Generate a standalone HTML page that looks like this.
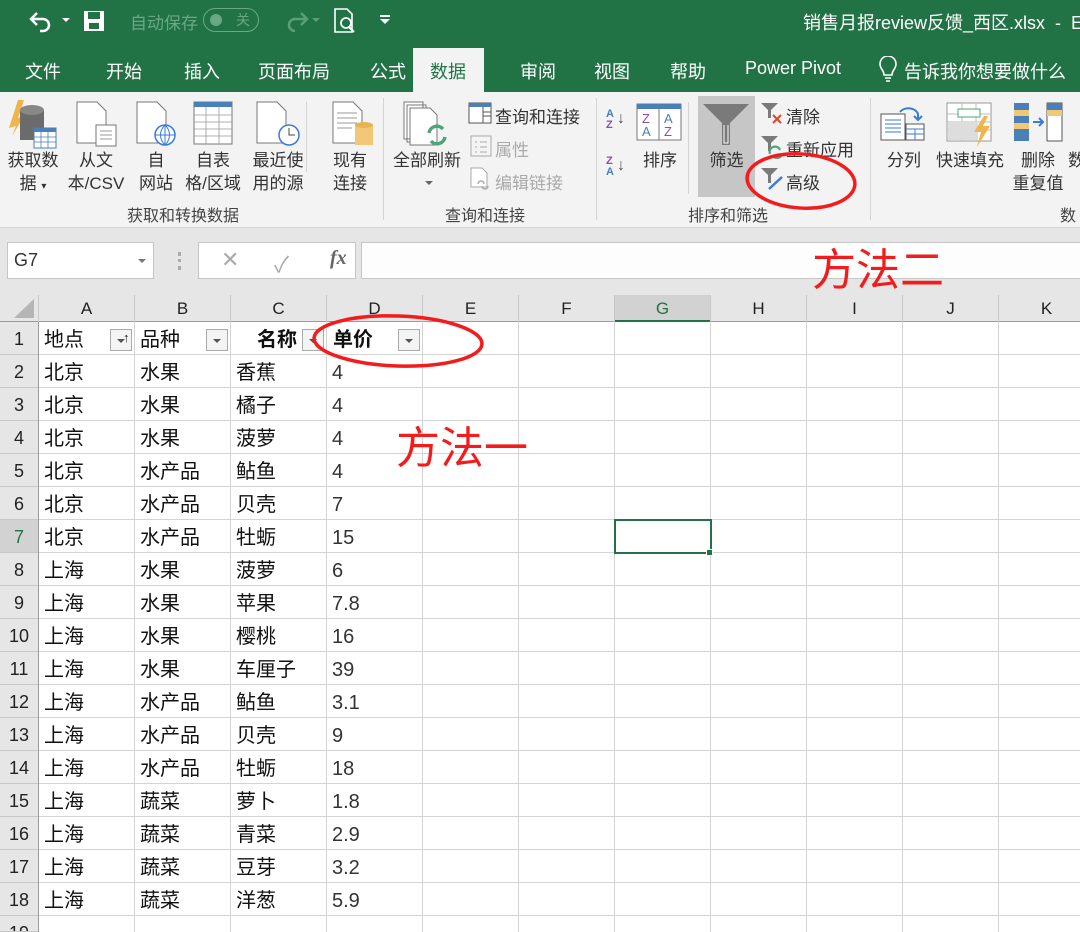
<!DOCTYPE html>
<html><head><meta charset="utf-8"><style>
*{margin:0;padding:0;box-sizing:border-box}
html,body{width:1080px;height:932px;overflow:hidden}
body{position:relative;background:#fff;font-family:"Liberation Sans","Noto Sans CJK SC",sans-serif;color:#222}
.a{position:absolute;white-space:nowrap}
#title{left:0;top:0;width:1080px;height:92px;background:#217346}
.tab{position:absolute;top:58px;color:#fff;font-size:18px}
#ribbon{left:0;top:92px;width:1080px;height:136px;background:#f3f3f3;border-bottom:1px solid #d6d6d6}
.rl{position:absolute;font-size:17px;color:#333;text-align:center;line-height:23px}
.gl{position:absolute;top:202px;font-size:16px;color:#444}
.sep{position:absolute;top:98px;width:1px;height:122px;background:#d4d4d4}
#fbar{left:0;top:228px;width:1080px;height:67px;background:#e6e6e6}
#grid{left:39px;top:322px;width:1041px;height:610px;
background-image:repeating-linear-gradient(90deg,transparent 0 95px,#d4d4d4 95px 96px),repeating-linear-gradient(180deg,transparent 0 32px,#d4d4d4 32px 33px)}
#colh{left:0;top:295px;width:1080px;height:27px;background:#e6e6e6;border-bottom:1px solid #9b9b9b}
.ch{position:absolute;top:295px;height:27px;width:96px;text-align:center;font-size:17px;line-height:28px;border-right:1px solid #c8c8c8;color:#222}
#rowh{left:0;top:322px;width:39px;height:610px;background:#e6e6e6;border-right:1px solid #9b9b9b}
.rh{position:absolute;left:0;width:38px;text-align:center;font-size:18px;height:33px;line-height:35px;border-bottom:1px solid #c8c8c8;color:#222}
.c{position:absolute;font-size:20px;line-height:37px;height:33px;color:#111}
.n{color:#333;font-size:20px}
.dd{position:absolute;width:22px;height:22px;border:1px solid #aaa;background:#f4f4f4}
.dd:after{content:"";position:absolute;left:6px;top:9px;border-left:4px solid transparent;border-right:4px solid transparent;border-top:4px solid #555}
.red{position:absolute;color:#f21c1c;font-size:44px}
</style></head><body>
<div class="a" id="title"></div>
<svg class="a" style="left:28px;top:9px" width="26" height="24" viewBox="0 0 26 24"><path d="M9 4 L3 10 L9 16" stroke="#fff" stroke-width="2.5" fill="none"/><path d="M3 10 H15 a6 6 0 0 1 0 12 H12" stroke="#fff" stroke-width="2.5" fill="none"/></svg>
<div class="a" style="left:62px;top:18px;border-left:4px solid transparent;border-right:4px solid transparent;border-top:4px solid #fff"></div>
<svg class="a" style="left:83px;top:10px" width="22" height="22" viewBox="0 0 22 22"><rect x="1" y="1" width="20" height="20" fill="#fff"/><rect x="5" y="2" width="12" height="7" fill="#217346"/><rect x="6" y="13" width="10" height="6" fill="#217346"/></svg>
<div class="a" style="left:130px;top:9px;font-size:17px;color:#6aa884">自动保存</div>
<div class="a" style="left:203px;top:8px;width:56px;height:24px;border:1.5px solid #6aa884;border-radius:12px"></div>
<div class="a" style="left:210px;top:14px;width:12px;height:12px;border-radius:6px;background:#6aa884"></div>
<div class="a" style="left:236px;top:10px;font-size:14px;color:#6aa884">关</div>
<svg class="a" style="left:285px;top:10px" width="26" height="22" viewBox="0 0 26 22"><path d="M16 3 L22 9 L16 15 M22 9 H10 a6 6 0 0 0 0 12" stroke="#5a9f77" stroke-width="2.5" fill="none"/></svg>
<div class="a" style="left:312px;top:18px;border-left:4px solid transparent;border-right:4px solid transparent;border-top:4px solid #5a9f77"></div>
<svg class="a" style="left:334px;top:8px" width="24" height="26" viewBox="0 0 24 26"><path d="M1 1 H13 L18 6 V24 H1 Z" stroke="#fff" stroke-width="1.6" fill="none"/><circle cx="12" cy="15" r="5" stroke="#fff" stroke-width="1.8" fill="none"/><path d="M15 19 L20 24" stroke="#fff" stroke-width="2"/></svg>
<div class="a" style="left:380px;top:15px;width:10px;height:2px;background:#fff"></div>
<div class="a" style="left:380px;top:19px;border-left:5px solid transparent;border-right:5px solid transparent;border-top:5px solid #fff"></div>
<div class="a" style="left:803px;top:9px;font-size:18px;color:#fff">销售月报review反馈_西区.xlsx&nbsp; - &nbsp;E</div>
<div class="a" style="left:413px;top:48px;width:71px;height:45px;background:#f3f3f3"></div>
<div class="tab" style="left:25px">文件</div>
<div class="tab" style="left:106px">开始</div>
<div class="tab" style="left:184px">插入</div>
<div class="tab" style="left:258px">页面布局</div>
<div class="tab" style="left:370px">公式</div>
<div class="tab" style="left:430px;color:#217346">数据</div>
<div class="tab" style="left:520px">审阅</div>
<div class="tab" style="left:594px">视图</div>
<div class="tab" style="left:670px">帮助</div>
<div class="tab" style="left:745px">Power Pivot</div>
<svg class="a" style="left:878px;top:56px" width="20" height="28" viewBox="0 0 20 28"><path d="M6 19 C6 14 2 13 2 8 a8 8 0 0 1 16 0 C18 13 14 14 14 19 Z M7 22 H13 M8 25 H12" stroke="#fff" stroke-width="1.6" fill="none"/></svg>
<div class="tab" style="left:904px">告诉我你想要做什么</div>
<div class="a" id="ribbon"></div>
<svg class="a" style="left:8px;top:100px" width="50" height="50" viewBox="0 0 50 50"><path d="M10 0 L1 28 L8 26 L4 36 L16 16 L10 18 L16 0Z" fill="#f0b54a"/><rect x="12" y="10" width="24" height="30" fill="#6b6b6b"/><ellipse cx="24" cy="10" rx="12" ry="5" fill="#888"/><rect x="26" y="28" width="22" height="20" fill="#fff" stroke="#4a7fb8"/><rect x="26" y="28" width="22" height="4" fill="#4a7fb8"/><path d="M26 37 H48 M26 42 H48 M33 32 V48 M40 32 V48" stroke="#4a7fb8" stroke-width=".8"/></svg>
<svg class="a" style="left:76px;top:101px" width="42" height="46" viewBox="0 0 42 46"><path d="M1 1 H21 L30 10 V42 H1Z" fill="#fff" stroke="#777"/><rect x="20" y="24" width="20" height="21" fill="#fff" stroke="#777"/><path d="M24 30 H36 M24 34 H36 M24 38 H36" stroke="#999"/></svg>
<svg class="a" style="left:136px;top:101px" width="42" height="46" viewBox="0 0 42 46"><path d="M1 1 H21 L30 10 V42 H1Z" fill="#fff" stroke="#777"/><circle cx="29" cy="34" r="10" fill="#fff" stroke="#3a7bd5" stroke-width="1.5"/><path d="M19 34 H39 M29 24 V44 M29 24 C23 30 23 38 29 44 M29 24 C35 30 35 38 29 44" stroke="#3a7bd5" fill="none"/></svg>
<svg class="a" style="left:193px;top:101px" width="40" height="44" viewBox="0 0 40 44"><rect x="1" y="1" width="38" height="42" fill="#fff" stroke="#777"/><rect x="1" y="1" width="38" height="5" fill="#4a7fb8"/><path d="M1 14 H39 M1 21 H39 M1 28 H39 M1 35 H39 M13 6 V43 M26 6 V43" stroke="#999" stroke-width=".8"/></svg>
<svg class="a" style="left:256px;top:101px" width="44" height="46" viewBox="0 0 44 46"><path d="M1 1 H21 L30 10 V42 H1Z" fill="#fff" stroke="#777"/><circle cx="33" cy="34" r="10" fill="#fff" stroke="#3a7bd5" stroke-width="1.5"/><path d="M33 27 V34 H39" stroke="#444" fill="none"/></svg>
<div class="sep" style="left:306px;top:102px;height:70px"></div>
<svg class="a" style="left:332px;top:101px" width="44" height="46" viewBox="0 0 44 46"><path d="M1 1 H21 L30 10 V42 H1Z" fill="#fff" stroke="#777"/><path d="M5 12 H25 M5 17 H25 M5 22 H25 M5 27 H20" stroke="#999"/><rect x="23" y="24" width="18" height="20" fill="#f0c878"/><ellipse cx="32" cy="24" rx="9" ry="3" fill="#e6b450"/></svg>
<div class="rl" style="left:0;top:149px;width:66px">获取数<br>据 <span style="font-size:10px">▾</span></div>
<div class="rl" style="left:63px;top:149px;width:66px">从文<br>本/CSV</div>
<div class="rl" style="left:130px;top:149px;width:52px">自<br>网站</div>
<div class="rl" style="left:183px;top:149px;width:60px">自表<br>格/区域</div>
<div class="rl" style="left:245px;top:149px;width:66px">最近使<br>用的源</div>
<div class="rl" style="left:320px;top:149px;width:60px">现有<br>连接</div>
<div class="gl" style="left:127px">获取和转换数据</div>
<div class="sep" style="left:383px"></div>
<svg class="a" style="left:403px;top:101px" width="50" height="50" viewBox="0 0 50 50"><path d="M1 1 H20 V38 H1Z M4 4 H23 V41 H4Z" fill="#fff" stroke="#777"/><path d="M7 7 H27 L34 14 V44 H7Z" fill="#fff" stroke="#777"/><path d="M26 32 a8 8 0 0 1 14 -4 M42 36 a8 8 0 0 1 -14 4" stroke="#4fa37a" stroke-width="3.5" fill="none"/></svg>
<div class="rl" style="left:388px;top:149px;width:78px">全部刷新</div>
<div class="a" style="left:425px;top:181px;border-left:4px solid transparent;border-right:4px solid transparent;border-top:4px solid #666"></div>
<svg class="a" style="left:468px;top:102px" width="24" height="22" viewBox="0 0 24 22"><rect x="1" y="1" width="22" height="20" fill="#fff" stroke="#555"/><rect x="1" y="1" width="22" height="4" fill="#4a7fb8"/><path d="M15 5 V21 M15 10 H23 M15 14 H23" stroke="#555"/></svg>
<div class="a" style="left:495px;top:103px;font-size:17px;color:#333">查询和连接</div>
<svg class="a" style="left:470px;top:135px" width="22" height="22" viewBox="0 0 22 22"><rect x="1" y="1" width="20" height="20" fill="#f4f4f4" stroke="#aaa"/><path d="M5 7 H7 M10 7 H17 M5 12 H7 M10 12 H17 M5 17 H7 M10 17 H17" stroke="#aaa"/></svg>
<div class="a" style="left:495px;top:136px;font-size:17px;color:#aaa">属性</div>
<svg class="a" style="left:470px;top:167px" width="22" height="24" viewBox="0 0 22 24"><path d="M1 1 H12 L17 6 V20 H1Z" fill="#fff" stroke="#aaa"/><path d="M8 17 a3 3 0 0 1 6 0 M12 19 a3 3 0 0 0 6 0" stroke="#aaa" fill="none" stroke-width="1.5"/></svg>
<div class="a" style="left:495px;top:169px;font-size:17px;color:#aaa">编辑链接</div>
<div class="gl" style="left:445px">查询和连接</div>
<div class="sep" style="left:596px"></div>
<div class="a" style="left:606px;top:109px;font-size:11px;font-weight:bold;line-height:11px;color:#4a7fb8">A<br><span style="color:#8a4fb0">Z</span></div>
<div class="a" style="left:617px;top:110px;font-size:16px;color:#555">↓</div>
<div class="a" style="left:606px;top:156px;font-size:11px;font-weight:bold;line-height:11px;color:#8a4fb0">Z<br><span style="color:#4a7fb8">A</span></div>
<div class="a" style="left:617px;top:157px;font-size:16px;color:#555">↓</div>
<svg class="a" style="left:636px;top:103px" width="46" height="38" viewBox="0 0 46 38"><rect x="1" y="1" width="44" height="36" fill="#fff" stroke="#777"/><rect x="1" y="1" width="44" height="5" fill="#4a7fb8"/><path d="M23 6 V37" stroke="#777"/><text x="6" y="20" font-size="13" fill="#8a4fb0" font-family="Liberation Sans">Z</text><text x="6" y="33" font-size="13" fill="#4a7fb8" font-family="Liberation Sans">A</text><text x="28" y="20" font-size="13" fill="#4a7fb8" font-family="Liberation Sans">A</text><text x="28" y="33" font-size="13" fill="#8a4fb0" font-family="Liberation Sans">Z</text></svg>
<div class="rl" style="left:636px;top:149px;width:48px">排序</div>
<div class="sep" style="left:688px;top:102px;height:92px"></div>
<div class="a" style="left:698px;top:96px;width:57px;height:101px;background:#c6c6c6"></div>
<svg class="a" style="left:702px;top:103px" width="48" height="42" viewBox="0 0 48 42"><path d="M1 1 H47 L28 20 V42 H20 V20Z" fill="#7a7a7a"/><path d="M22 22 V40 H26 V22" stroke="#fff" stroke-width="1" fill="none"/></svg>
<div class="rl" style="left:698px;top:149px;width:57px">筛选</div>
<svg class="a" style="left:760px;top:102px" width="24" height="24" viewBox="0 0 24 24"><path d="M1 1 H18 L11 8 V16 H8 V8Z" fill="#7a7a7a"/><path d="M13 13 L21 21 M21 13 L13 21" stroke="#e0452a" stroke-width="2"/></svg>
<div class="a" style="left:786px;top:103px;font-size:17px;color:#333">清除</div>
<svg class="a" style="left:760px;top:135px" width="24" height="24" viewBox="0 0 24 24"><path d="M1 1 H18 L11 8 V16 H8 V8Z" fill="#7a7a7a"/><path d="M10 19 a5 5 0 0 1 10 -4 M22 18 a5 5 0 0 1 -9 3" stroke="#4fa37a" stroke-width="2.2" fill="none"/></svg>
<div class="a" style="left:786px;top:136px;font-size:17px;color:#333">重新应用</div>
<svg class="a" style="left:760px;top:167px" width="24" height="24" viewBox="0 0 24 24"><path d="M1 1 H18 L11 8 V16 H8 V8Z" fill="#7a7a7a"/><path d="M22 10 L9 22" stroke="#3a7bd5" stroke-width="2.5"/></svg>
<div class="a" style="left:786px;top:169px;font-size:17px;color:#333">高级</div>
<div class="gl" style="left:688px">排序和筛选</div>
<div class="sep" style="left:870px"></div>
<svg class="a" style="left:880px;top:102px" width="46" height="40" viewBox="0 0 46 40"><rect x="1" y="12" width="24" height="26" fill="#fff" stroke="#555"/><path d="M5 18 H21 M5 22 H21 M5 26 H21 M5 30 H21" stroke="#3a7bd5"/><rect x="26" y="22" width="18" height="16" fill="#fff" stroke="#555"/><path d="M26 27 H44 M26 32 H44 M35 27 V38" stroke="#3a7bd5"/><path d="M20 10 a10 8 0 0 1 18 2 L38 18 M34 14 L38 18 L42 14" stroke="#3a7bd5" stroke-width="2" fill="none"/></svg>
<div class="rl" style="left:880px;top:149px;width:48px">分列</div>
<svg class="a" style="left:946px;top:102px" width="48" height="46" viewBox="0 0 48 46"><rect x="1" y="1" width="44" height="38" fill="#fff" stroke="#999"/><path d="M1 12 H45 M1 20 H45 M1 28 H45 M16 1 V39 M30 1 V39" stroke="#bbb"/><rect x="12" y="7" width="22" height="8" fill="#fff" stroke="#4fa37a"/><rect x="2" y="20" width="30" height="18" fill="#ddd"/><path d="M38 14 L28 30 H35 L31 45 L44 24 H37 L42 14Z" fill="#f0b54a"/></svg>
<div class="rl" style="left:932px;top:149px;width:76px">快速填充</div>
<svg class="a" style="left:1013px;top:102px" width="50" height="40" viewBox="0 0 50 40"><rect x="1" y="1" width="15" height="38" fill="#4a7fb8"/><rect x="1" y="8" width="15" height="6" fill="#f0c878"/><rect x="1" y="21" width="15" height="6" fill="#f0c878"/><path d="M20 20 H30 M26 16 L30 20 L26 24" stroke="#3a7bd5" stroke-width="2" fill="none"/><rect x="34" y="1" width="15" height="38" fill="#fff" stroke="#555"/><rect x="34" y="1" width="15" height="7" fill="#4a7fb8"/><rect x="34" y="8" width="15" height="6" fill="#f0c878"/></svg>
<div class="rl" style="left:1010px;top:149px;width:56px">删除<br>重复值</div>
<div class="rl" style="left:1068px;top:149px;width:20px;text-align:left">数</div>
<div class="gl" style="left:1060px">数</div>
<div class="a" id="fbar"></div>
<div class="a" style="left:7px;top:242px;width:147px;height:37px;background:#fff;border:1px solid #c6c6c6"></div>
<div class="a" style="left:14px;top:250px;font-size:18px;color:#333">G7</div>
<div class="a" style="left:138px;top:259px;border-left:4px solid transparent;border-right:4px solid transparent;border-top:4px solid #777"></div>
<div class="a" style="left:178px;top:252px;width:3px;height:18px;border-left:3px dotted #aaa"></div>
<div class="a" style="left:198px;top:242px;width:158px;height:37px;background:#fff;border:1px solid #c6c6c6"></div>
<div class="a" style="left:221px;top:247px;font-size:22px;color:#aaa">✕</div>
<div class="a" style="left:274px;top:247px;font-size:22px;color:#aaa">✓</div>
<div class="a" style="left:330px;top:247px;font-size:20px;color:#666;font-family:'Liberation Serif',serif;font-style:italic;font-weight:bold">fx</div>
<div class="a" style="left:361px;top:242px;width:730px;height:37px;background:#fdfdfd;border:1px solid #c6c6c6"></div>
<div class="a" id="grid"></div>
<div class="a" id="colh"></div>
<div class="a" style="left:0;top:295px;width:39px;height:27px;border-right:1px solid #c8c8c8"></div>
<div class="a" style="left:14px;top:299px;border-left:20px solid transparent;border-bottom:19px solid #b5b5b5"></div>
<div class="a" style="left:615px;top:295px;width:96px;height:27px;background:#d2d2d2;border-bottom:2px solid #217346"></div>
<div class="ch" style="left:39px">A</div><div class="ch" style="left:135px">B</div><div class="ch" style="left:231px">C</div><div class="ch" style="left:327px">D</div><div class="ch" style="left:423px">E</div><div class="ch" style="left:519px">F</div><div class="ch" style="left:615px;color:#217346">G</div><div class="ch" style="left:711px">H</div><div class="ch" style="left:807px">I</div><div class="ch" style="left:903px">J</div><div class="ch" style="left:999px">K</div>
<div class="a" id="rowh"></div>
<div class="rh" style="top:322px">1</div><div class="rh" style="top:355px">2</div><div class="rh" style="top:388px">3</div><div class="rh" style="top:421px">4</div><div class="rh" style="top:454px">5</div><div class="rh" style="top:487px">6</div><div class="rh" style="top:520px;background:#d2d2d2;color:#217346">7</div><div class="rh" style="top:553px">8</div><div class="rh" style="top:586px">9</div><div class="rh" style="top:619px">10</div><div class="rh" style="top:652px">11</div><div class="rh" style="top:685px">12</div><div class="rh" style="top:718px">13</div><div class="rh" style="top:751px">14</div><div class="rh" style="top:784px">15</div><div class="rh" style="top:817px">16</div><div class="rh" style="top:850px">17</div><div class="rh" style="top:883px">18</div><div class="rh" style="top:916px;height:16px;overflow:hidden">19</div>
<div class="c" style="left:44px;top:322px">地点</div>
<div class="dd" style="left:110px;top:329px"></div><div class="a" style="left:123px;top:330px;font-size:13px">↑</div>
<div class="c" style="left:140px;top:322px">品种</div>
<div class="dd" style="left:206px;top:329px"></div>
<div class="c" style="left:257px;top:322px;font-weight:bold">名称</div>
<div class="dd" style="left:302px;top:329px"></div>
<div class="c" style="left:333px;top:322px;font-weight:bold">单价</div>
<div class="dd" style="left:398px;top:329px"></div>
<div class="c" style="left:44px;top:355px">北京</div><div class="c" style="left:140px;top:355px">水果</div><div class="c" style="left:236px;top:355px">香蕉</div><div class="c n" style="left:332px;top:355px">4</div>
<div class="c" style="left:44px;top:388px">北京</div><div class="c" style="left:140px;top:388px">水果</div><div class="c" style="left:236px;top:388px">橘子</div><div class="c n" style="left:332px;top:388px">4</div>
<div class="c" style="left:44px;top:421px">北京</div><div class="c" style="left:140px;top:421px">水果</div><div class="c" style="left:236px;top:421px">菠萝</div><div class="c n" style="left:332px;top:421px">4</div>
<div class="c" style="left:44px;top:454px">北京</div><div class="c" style="left:140px;top:454px">水产品</div><div class="c" style="left:236px;top:454px">鲇鱼</div><div class="c n" style="left:332px;top:454px">4</div>
<div class="c" style="left:44px;top:487px">北京</div><div class="c" style="left:140px;top:487px">水产品</div><div class="c" style="left:236px;top:487px">贝壳</div><div class="c n" style="left:332px;top:487px">7</div>
<div class="c" style="left:44px;top:520px">北京</div><div class="c" style="left:140px;top:520px">水产品</div><div class="c" style="left:236px;top:520px">牡蛎</div><div class="c n" style="left:332px;top:520px">15</div>
<div class="c" style="left:44px;top:553px">上海</div><div class="c" style="left:140px;top:553px">水果</div><div class="c" style="left:236px;top:553px">菠萝</div><div class="c n" style="left:332px;top:553px">6</div>
<div class="c" style="left:44px;top:586px">上海</div><div class="c" style="left:140px;top:586px">水果</div><div class="c" style="left:236px;top:586px">苹果</div><div class="c n" style="left:332px;top:586px">7.8</div>
<div class="c" style="left:44px;top:619px">上海</div><div class="c" style="left:140px;top:619px">水果</div><div class="c" style="left:236px;top:619px">樱桃</div><div class="c n" style="left:332px;top:619px">16</div>
<div class="c" style="left:44px;top:652px">上海</div><div class="c" style="left:140px;top:652px">水果</div><div class="c" style="left:236px;top:652px">车厘子</div><div class="c n" style="left:332px;top:652px">39</div>
<div class="c" style="left:44px;top:685px">上海</div><div class="c" style="left:140px;top:685px">水产品</div><div class="c" style="left:236px;top:685px">鲇鱼</div><div class="c n" style="left:332px;top:685px">3.1</div>
<div class="c" style="left:44px;top:718px">上海</div><div class="c" style="left:140px;top:718px">水产品</div><div class="c" style="left:236px;top:718px">贝壳</div><div class="c n" style="left:332px;top:718px">9</div>
<div class="c" style="left:44px;top:751px">上海</div><div class="c" style="left:140px;top:751px">水产品</div><div class="c" style="left:236px;top:751px">牡蛎</div><div class="c n" style="left:332px;top:751px">18</div>
<div class="c" style="left:44px;top:784px">上海</div><div class="c" style="left:140px;top:784px">蔬菜</div><div class="c" style="left:236px;top:784px">萝卜</div><div class="c n" style="left:332px;top:784px">1.8</div>
<div class="c" style="left:44px;top:817px">上海</div><div class="c" style="left:140px;top:817px">蔬菜</div><div class="c" style="left:236px;top:817px">青菜</div><div class="c n" style="left:332px;top:817px">2.9</div>
<div class="c" style="left:44px;top:850px">上海</div><div class="c" style="left:140px;top:850px">蔬菜</div><div class="c" style="left:236px;top:850px">豆芽</div><div class="c n" style="left:332px;top:850px">3.2</div>
<div class="c" style="left:44px;top:883px">上海</div><div class="c" style="left:140px;top:883px">蔬菜</div><div class="c" style="left:236px;top:883px">洋葱</div><div class="c n" style="left:332px;top:883px">5.9</div>
<div class="a" style="left:614px;top:519px;width:98px;height:35px;border:2px solid #217346"></div>
<div class="a" style="left:706px;top:549px;width:7px;height:7px;background:#217346;border:1px solid #fff"></div>
<svg class="a" style="left:0;top:0" width="1080" height="932"><ellipse cx="801" cy="181" rx="54" ry="27" stroke="#f21c1c" stroke-width="3.5" fill="none" transform="rotate(4 801 181)"/><ellipse cx="398" cy="341" rx="84" ry="25" stroke="#f21c1c" stroke-width="3.5" fill="none" transform="rotate(2 398 341)"/></svg>
<div class="red" style="left:812px;top:234px">方法二</div>
<div class="red" style="left:396px;top:412px">方法一</div>
</body></html>
